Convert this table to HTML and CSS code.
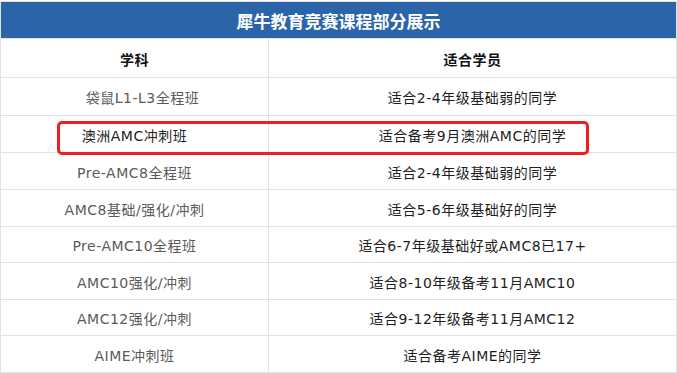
FILE: index.html
```html
<!DOCTYPE html>
<html lang="zh">
<head>
<meta charset="utf-8">
<title>犀牛教育竞赛课程部分展示</title>
<link rel="stylesheet" href="styles.css">
</head>
<body>
<div class="wrap">
  <div class="courses">
    <div class="title">犀牛教育竞赛课程部分展示</div>
    <div class="row head"><div class="c1">学科</div><div class="c2">适合学员</div></div>
    <div class="row h37"><div class="c1 indent">袋鼠L1-L3全程班</div><div class="c2">适合2-4年级基础弱的同学</div></div>
    <div class="row"><div class="c1 dark">澳洲AMC冲刺班</div><div class="c2">适合备考9月澳洲AMC的同学</div></div>
    <div class="row"><div class="c1">Pre-AMC8全程班</div><div class="c2">适合2-4年级基础弱的同学</div></div>
    <div class="row"><div class="c1">AMC8基础/强化/冲刺</div><div class="c2">适合5-6年级基础好的同学</div></div>
    <div class="row h35"><div class="c1">Pre-AMC10全程班</div><div class="c2">适合6-7年级基础好或AMC8已17+</div></div>
    <div class="row"><div class="c1">AMC10强化/冲刺</div><div class="c2">适合8-10年级备考11月AMC10</div></div>
    <div class="row h35"><div class="c1">AMC12强化/冲刺</div><div class="c2">适合9-12年级备考11月AMC12</div></div>
    <div class="row"><div class="c1">AIME冲刺班</div><div class="c2">适合备考AIME的同学</div></div>
  </div>
  <div class="mark"></div>
</div>
</body>
</html>
```
FILE: styles.css
```css
html, body {
  margin: 0;
  padding: 0;
  background: #fff;
}
body {
  font-family: "DejaVu Sans", "Noto Sans CJK SC", sans-serif;
  font-size: 14px;
}
.wrap {
  position: relative;
  padding-top: 1px;
  width: 677px;
}
.courses {
  width: 677px;
  box-sizing: border-box;
  border: 1px solid #e2e2e2;
  border-bottom: none;
}
.title {
  height: 37px;
  box-sizing: border-box;
  padding-top: 1px;
  background: #2c64a9;
  color: #fff;
  font-family: "Noto Sans CJK SC", sans-serif;
  font-size: 17px;
  font-weight: bold;
  display: flex;
  align-items: center;
  justify-content: center;
  border-bottom: 1px solid #e2e2e2;
}
.row {
  display: flex;
  height: 37px;
  box-sizing: border-box;
  border-bottom: 1px solid #e2e2e2;
  letter-spacing: 0.5px;
}
.row.head { height: 39px; }
.row.h37 { height: 38px; }
.row.h35 { height: 36px; }
.c1, .c2 {
  display: flex;
  align-items: center;
  justify-content: center;
  padding-top: 1px;
  box-sizing: border-box;
}
.c1 {
  width: 268px;
  flex: none;
  border-right: 1px solid #e2e2e2;
  color: #5a5a5a;
}
.c1.indent { padding-left: 16px; }
.c1.dark { color: #222; }
.c2 {
  flex: 1;
  color: #1e1e1e;
}
.head .c1, .head .c2 {
  font-family: "Noto Sans CJK SC", sans-serif;
  font-weight: bold;
  color: #111;
  padding-top: 2px;
}
.mark {
  position: absolute;
  left: 57px;
  top: 121px;
  width: 532px;
  height: 34px;
  box-sizing: border-box;
  border: 3px solid #f01f1f;
  border-radius: 5px;
}
```
